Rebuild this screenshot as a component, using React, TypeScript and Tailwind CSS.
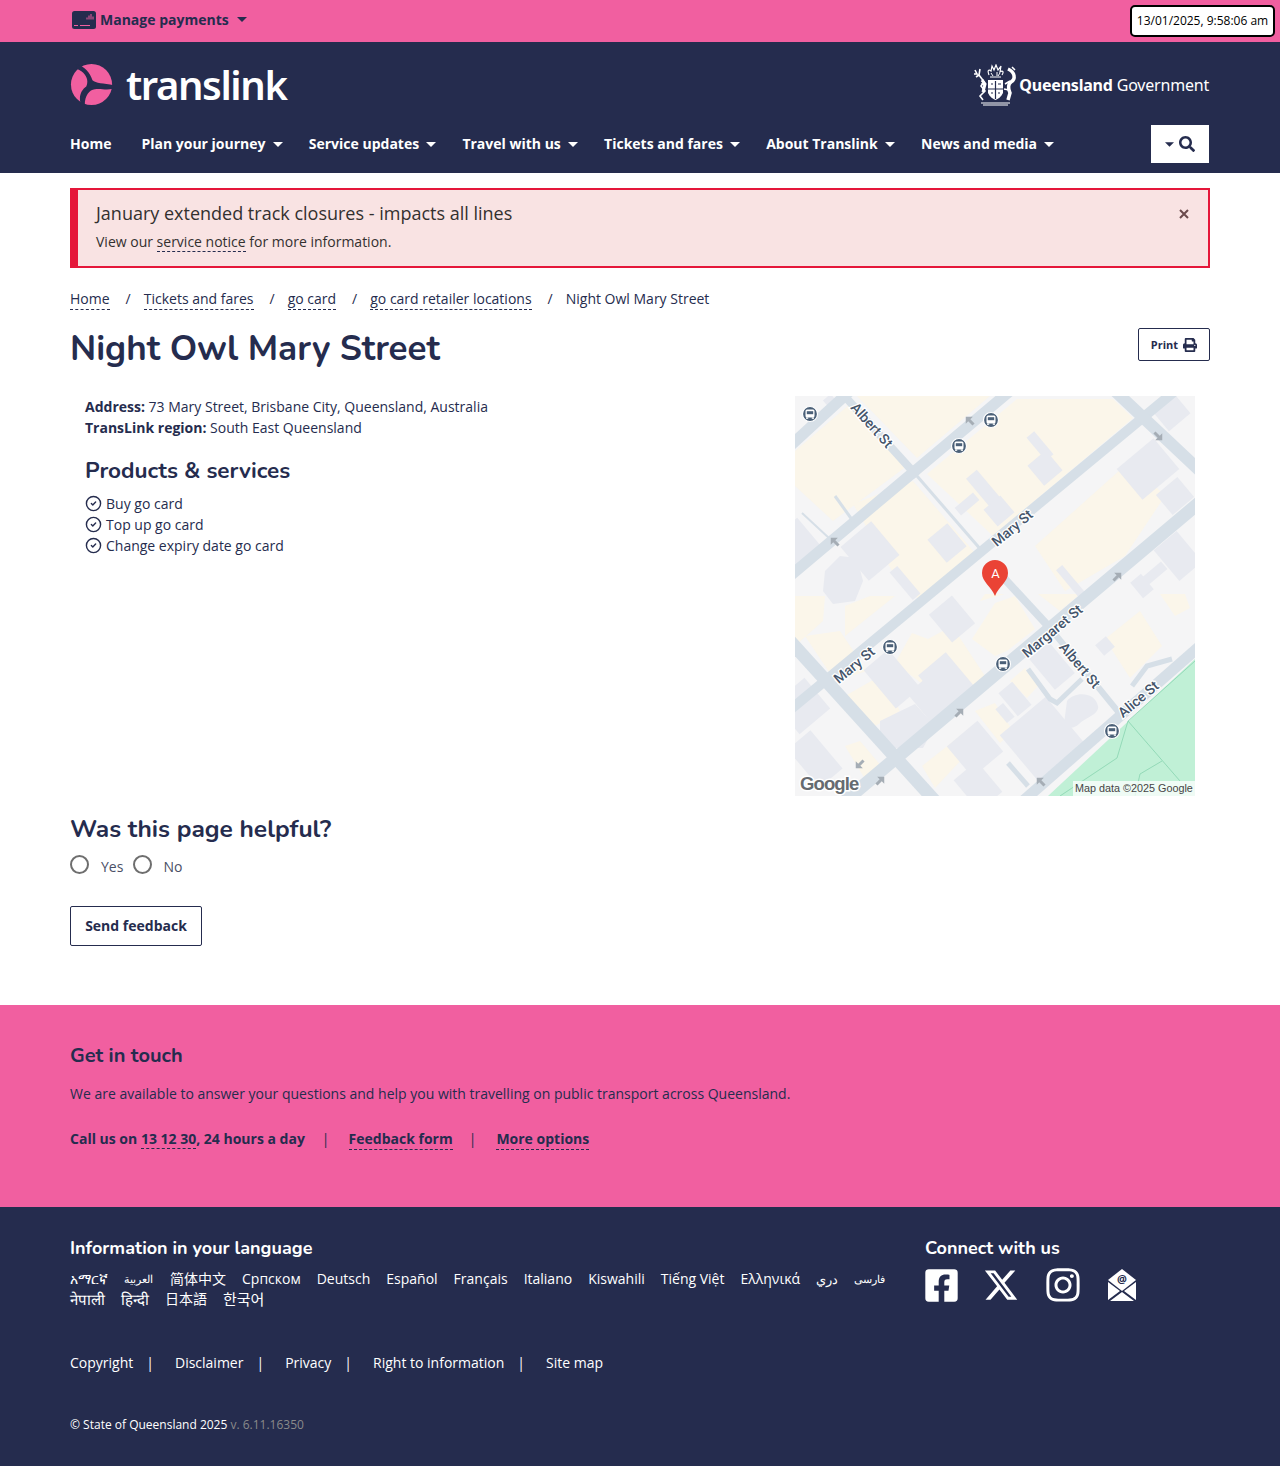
import { CircleCheck } from "lucide-react";
import { FaFacebookSquare, FaInstagram, FaPrint, FaSearch } from "react-icons/fa";
import { FaXTwitter } from "react-icons/fa6";

const Caret = ({ c = "#ffffff", w = 10, h = 5, cls = "" }: { c?: string; w?: number; h?: number; cls?: string }) => (
  <svg width={w} height={h} viewBox="0 0 10 5" className={cls}><path d="M0 0H10L5 5Z" fill={c} /></svg>
);

const Dash = ({ children, cls = "" }: { children: React.ReactNode; cls?: string }) => (
  <a className={`border-b border-dashed border-[#252c4e] ${cls}`}>{children}</a>
);

const cream: string[] = [
  "62,0 195,0 122,62",
  "132,78 222,3 318,3 338,22 198,140",
  "240,150 335,65 350,80 370,100 330,160 270,195",
  "58,108 118,85 180,157 125,205 100,180",
  "0,55 55,8 112,70 38,125 0,90",
  "0,200 30,200 28,225 0,250",
  "50,210 75,200 100,200 50,240",
  "10,240 45,235 72,275 40,285",
  "50,300 85,280 105,315 72,335",
  "100,267 117,237 133,243 157,230 190,280 177,300 157,267 130,290",
  "177,243 200,207 220,200 240,233 212,255 200,260",
  "185,205 190,198 210,198",
  "243,198 285,198 265,215",
  "215,285 230,272 243,290 232,302",
  "180,315 200,307 218,335 205,347",
  "127,370 165,340 170,360 140,392",
  "50,350 65,345 88,372 70,383",
  "310,243 345,215 367,250 335,282",
  "365,198 390,198 395,212 380,220",
  "300,100 340,88 345,125 310,150",
];

const grey: [number, number, number, number][] = [
  [188, 92, 14, 36], [172, 108, 24, 10], [204, 115, 22, 22], [245, 50, 10, 30], [250, 72, 24, 26],
  [152, 147, 26, 30], [75, 155, 40, 44], [0, 147, 36, 36], [110, 187, 10, 36], [377, 17, 28, 24],
  [353, 73, 48, 40], [380, 100, 28, 26], [383, 160, 30, 40], [360, 177, 24, 10], [347, 190, 14, 20],
  [277, 187, 8, 40], [157, 223, 30, 36], [97, 283, 32, 50], [153, 287, 36, 50], [137, 307, 26, 46],
  [7, 310, 40, 40], [20, 363, 30, 50], [180, 353, 40, 40], [220, 303, 18, 30], [210, 317, 10, 18],
  [247, 343, 60, 60], [257, 270, 26, 40], [310, 250, 14, 14], [183, 390, 30, 40], [35, 5, 10, 10],
];

const roads: [string, number][] = [
  ["-5,180 215,-5", 11],
  ["380,-5 -10,318", 10],
  ["405,106 50,405", 13],
  ["405,250 228,405", 11],
  ["-5,245 140,405", 13],
  ["45,-5 122,80", 8],
  ["122,80 187,155", 3],
  ["207,180 255,232", 8],
  ["255,232 325,318", 6],
  ["320,-5 405,75", 12],
  ["-5,50 55,-5", 11],
  ["40,100 58,125", 3],
  ["7,117 35,143", 2],
  ["213,367 233,390", 5],
  ["233,273 255,303 262,307 287,283", 5],
  ["337,290 352,270 377,263", 5],
];

const buses: [number, number][] = [[15, 18], [196, 24], [164, 50], [95, 251], [208, 268], [317, 335]];
const arrows: [number, number, number][] = [[175, 25, 225], [40, 146, 225], [363, 40, 45], [322, 181, -45], [164, 317, -45], [85, 385, -45], [246, 386, 225], [65, 368, 135]];
const labels: [string, number, number, number][] = [
  ["Albert St", 76, 30, 48], ["Mary St", 218, 133, -40], ["Mary St", 60, 270, -40],
  ["Margaret St", 258, 236, -40], ["Albert St", 284, 270, 50], ["Alice St", 344, 304, -40],
];

function MapArt() {
  return (
    <svg viewBox="0 0 400 400" width={400} height={400} className="block shrink-0">
      <rect width="400" height="400" fill="#f5f5f6" />
      {cream.map((p, i) => <polygon key={i} points={p} fill="#fbf6ea" />)}
      {grey.map(([x, y, w, h], i) => (
        <rect key={i} x={x - w / 2} y={y - h / 2} width={w} height={h} fill="#e8eaf0" transform={`rotate(-40 ${x} ${y})`} />
      ))}
      <polygon points="30,175 45,160 62,162 68,185 60,205 38,208 28,195" fill="#e8eaf0" />
      <polygon points="85,325 120,308 140,330 128,352 95,352 85,345" fill="#e8eaf0" />
      <path d="M272 305C280 295 300 296 303 310C305 318 290 322 284 328C275 336 268 330 270 320Z" fill="#e8eaf0" />
      <polygon points="400,263 400,400 253,400" fill="#c0f0d6" />
      <g fill="none" stroke="#7fd0ab" strokeWidth="0.7">
        <path d="M333 325L400 265M333 325L385 385M333 325L322 362L265 400M367 365L345 378L340 400" />
      </g>
      {roads.map(([p, w], i) => (
        <polyline key={i} points={p} fill="none" stroke="#d6dfe7" strokeWidth={w} />
      ))}
      {arrows.map(([x, y, r], i) => (
        <path key={i} transform={`translate(${x} ${y}) rotate(${r})`} d="M-5 1.5H1V5L6 0L1-5V-1.5H-5Z" fill="#a5adb5" />
      ))}
      {buses.map(([x, y], i) => (
        <g key={i} transform={`translate(${x} ${y})`}>
          <circle r="7.5" fill="#4b6078" stroke="#ffffff" strokeWidth="1.2" />
          <rect x="-4.5" y="-4.5" width="9" height="8" rx="1.5" fill="#ffffff" />
          <rect x="-3.2" y="-2.8" width="6.4" height="3" fill="#4b6078" />
          <rect x="-4" y="3.5" width="2.2" height="1.3" fill="#ffffff" />
          <rect x="1.8" y="3.5" width="2.2" height="1.3" fill="#ffffff" />
        </g>
      ))}
      {labels.map(([t, x, y, r], i) => (
        <text key={i} transform={`translate(${x} ${y}) rotate(${r})`} textAnchor="middle" dominantBaseline="middle"
          fontFamily="Roboto, sans-serif" fontWeight="500" fontSize="14" fill="#44546a" stroke="#ffffff" strokeWidth="2.5" paintOrder="stroke">{t}</text>
      ))}
      <path d="M200 200C196 190 187 186 187 177A13 13 0 0 1 213 177C213 186 204 190 200 200Z" fill="#ea4335" />
      <text x="200.5" y="182" textAnchor="middle" fontFamily="Roboto, sans-serif" fontSize="13" fill="#ffffff">A</text>
      <text x="5" y="394" fontFamily="'Liberation Sans', sans-serif" fontWeight="700" fontSize="18.5" letterSpacing="-0.9" fill="#666b70" stroke="#ffffff" strokeWidth="3" paintOrder="stroke">Google</text>
      <rect x="278" y="385" width="122" height="15" fill="#ffffff" fillOpacity="0.75" />
      <text x="280" y="396" fontFamily="'Liberation Sans', sans-serif" fontSize="10.8" fill="#444444">Map data ©2025 Google</text>
    </svg>
  );
}

const langs: [string, string][] = [
  ["አማርኛ", ""], ["العربية", "mr-[1px] text-[11px]"], ["简体中文", ""], ["Српском", ""], ["Deutsch", ""], ["Español", ""],
  ["Français", ""], ["Italiano", ""], ["Kiswahili", ""], ["Tiếng Việt", ""], ["Ελληνικά", ""], ["دري", "text-[13px]"],
  ["فارسی", "text-[11px]"], ["नेपाली", "text-[15px]"], ["हिन्दी", "text-[15px]"], ["日本語", ""], ["한국어", "text-[15px]"],
];
const nav = ["Plan your journey", "Service updates", "Travel with us", "Tickets and fares", "About Translink", "News and media"];
const crumbs = ["Home", "Tickets and fares", "go card", "go card retailer locations"];
const services = ["Buy go card", "Top up go card", "Change expiry date go card"];
const legal = ["Copyright", "Disclaimer", "Privacy", "Right to information"];
const HEAD = "font-['Nunito','Lato','Noto_Sans',sans-serif]";

export default function App() {
  return (
    <div className="relative min-h-[1466px] bg-white text-[14px] leading-[21px] text-[#252c4e] font-['Open_Sans','Noto_Sans_CJK_SC',sans-serif]">
      <div className="h-[42px] bg-[#f15fa0]">
        <div className="mx-auto flex h-[38px] w-[1140px] items-center pl-[2px]">
          <svg width="24" height="18" viewBox="0 0 24 18" className="mt-[1px] shrink-0">
            <rect width="24" height="18" rx="2.5" fill="#252c4e" />
            <path d="M2 14.5H6M8 14.5H18" stroke="#f15fa0" strokeWidth="1" />
            <path d="M15 8.5V6.5M17 8.5V4.5M19 8.5V3M21 8.5V5.5" stroke="#f15fa0" strokeWidth="1" />
          </svg>
          <span className="ml-[4px] font-bold text-[#252c4e]">Manage payments</span>
          <Caret c="#252c4e" cls="ml-[8px]" />
        </div>
      </div>
      <div className="absolute left-[1130px] top-[5px] flex h-[32px] w-[145px] items-center justify-center rounded-[5px] border-2 border-black bg-white pb-[2px] text-[12px] text-black">13/01/2025, 9:58:06 am</div>

      <header className="h-[131px] bg-[#252c4e]">
        <div className="mx-auto w-[1140px]">
          <div className="flex h-[83px] items-center justify-between pt-[2px]">
            <div className="flex items-center">
              <svg width="44" height="44" viewBox="5 2 46 46">
                <circle cx="27.5" cy="24.5" r="21.5" fill="#f15fa0" />
                <path d="M11 3C20 5 26 12 28.5 20C32 23.5 40 23 52 25.5L50 29C42 31 38 28.5 31 29.5C25 30 20 37 20.5 47L17 47C13 37 17 30 22 26.5C25 20 22 12 12 8Z" fill="#252c4e" />
              </svg>
              <span className="ml-[12px] font-['Noto_Sans',sans-serif] text-[40px] font-semibold leading-none tracking-[-1.4px] text-white">translink</span>
            </div>
            <div className="mr-[1px] flex items-center">
              <svg width="44" height="42" viewBox="0 0 44 42" fill="none" stroke="#ffffff">
                <path d="M16 11C14 6 16 5 18 7L19 2L21 6L23 1L25 6L28 2L27 8C30 6 31 8 29 11" strokeWidth="1.2" />
                <path d="M17 13H28M18 9L20 12M24 8V12M27 9L25 12" strokeWidth="1" />
                <path d="M2 6L4 10L1 10M7 5L6 11L9 15L11 18L8 22L12 27L7 32L10 36M6 11L3 13M8 20L13 21" strokeWidth="1.6" />
                <path d="M9 16L12 20L10 28" strokeWidth="3" />
                <path d="M15 16H30V29C28 33 25 35 22.5 36C20 35 17 33 15 29Z" fill="#ffffff" stroke="none" />
                <path d="M22.5 17V35M15 25H30M18 20H20M25 20H28M18 29H20M25 29H27" stroke="#252c4e" strokeWidth="1.2" />
                <path d="M35 5C42 8 43 15 38 18C35 20 35 25 37 29L35 36" strokeWidth="3.5" />
                <path d="M32 20L37 17M31 25L36 26M39 3L42 6" strokeWidth="1.5" />
                <path d="M8 39H37M10 41H35" strokeWidth="1" />
              </svg>
              <span className="ml-[2px] mt-[2px] font-['Noto_Sans',sans-serif] text-[16px] tracking-[-0.2px] text-white"><b className="font-bold">Queensland</b> Government</span>
            </div>
          </div>
          <nav className="flex h-[38px] items-center pb-[2px] text-white">
            <a className="mr-[30px] font-bold">Home</a>
            {nav.map((n) => (
              <a key={n} className="mr-[26.25px] flex items-center font-bold">
                {n}
                <Caret cls="ml-[7px] mt-[2px]" />
              </a>
            ))}
          </nav>
        </div>
      </header>
      <button className="absolute left-[1151px] top-[125px] flex h-[38px] w-[58px] items-center justify-center gap-[5px] bg-white text-[#252c4e]">
        <Caret c="#252c4e" w={9} h={5} />
        <FaSearch size={16} />
      </button>

      <main className="mx-auto w-[1140px]">
        <div className="relative mt-[15px] h-[80px] border-2 border-l-8 border-[#e5173a] bg-[#f9e3e3] pl-[18px] pt-[11px]">
          <div className="text-[18px] leading-[24px] text-[#33302f]">January extended track closures - impacts all lines</div>
          <div className="mt-[6px] text-[#33302f]">View our <Dash>service notice</Dash> for more information.</div>
          <svg width="10" height="10" viewBox="0 0 10 10" className="absolute right-[19px] top-[19px]"><path d="M1 1L9 9M9 1L1 9" stroke="#6b4a4c" strokeWidth="2" /></svg>
        </div>

        <div className="mt-[21px] flex items-start leading-[20px]">
          {crumbs.map((c) => (
            <span key={c} className="flex items-start">
              <Dash>{c}</Dash>
              <span className="ml-[16px] mr-[13px]">/</span>
            </span>
          ))}
          <span>Night Owl Mary Street</span>
        </div>

        <div className="mt-[18px] flex items-start justify-between">
          <h1 className={`${HEAD} text-[35px] font-bold leading-[42px]`}>Night Owl Mary Street</h1>
          <button className="flex h-[33px] w-[72px] items-center justify-center gap-[5px] rounded-[2px] border border-[#252c4e] text-[11px] font-bold">Print <FaPrint size={14} /></button>
        </div>

        <div className="mt-[26px] flex justify-between px-[15px]">
          <div>
            <p><b>Address:</b> 73 Mary Street, Brisbane City, Queensland, Australia</p>
            <p><b>TransLink region:</b> South East Queensland</p>
            <h2 className={`${HEAD} mt-[18px] text-[22.5px] font-bold leading-[30px]`}>Products &amp; services</h2>
            <ul className="mt-[7px]">
              {services.map((s) => (
                <li key={s} className="flex items-center gap-[4px]"><CircleCheck size={17} strokeWidth={2} />{s}</li>
              ))}
            </ul>
          </div>
          <MapArt />
        </div>

        <h2 className={`${HEAD} mt-[17px] text-[24.5px] font-bold leading-[32px]`}>Was this page helpful?</h2>
        <div className="mt-[6px] flex h-[26px] items-center text-[#4a4f66]">
          <span className="h-[19px] w-[19px] rounded-full border-2 border-[#6e6e6e]" />
          <span className="ml-[12px] mr-[10px] mt-[5px]">Yes</span>
          <span className="h-[19px] w-[19px] rounded-full border-2 border-[#6e6e6e]" />
          <span className="ml-[11px] mt-[5px]">No</span>
        </div>
        <button className="mt-[29px] h-[40px] w-[132px] rounded-[2px] border border-[#252c4e] pb-[2px] text-center font-bold">Send feedback</button>
      </main>

      <section className="mt-[59px] h-[202px] bg-[#f15fa0]">
        <div className="mx-auto w-[1140px] pt-[38px]">
          <h2 className={`${HEAD} text-[20px] font-bold leading-[26px]`}>Get in touch</h2>
          <p className="mt-[14px]">We are available to answer your questions and help you with travelling on public transport across Queensland.</p>
          <div className="mt-[24px] flex items-baseline font-bold">
            <span>Call us on <Dash>13 12 30</Dash>, 24 hours a day</span>
            <span className="ml-[17px] mr-[19px] font-normal">|</span>
            <Dash>Feedback form</Dash>
            <span className="ml-[16px] mr-[20px] font-normal">|</span>
            <Dash>More options</Dash>
          </div>
        </div>
      </section>

      <footer className="h-[259px] bg-[#252c4e] text-white">
        <div className="mx-auto w-[1140px] pt-[29px]">
          <div className="flex">
            <div className="w-[855px]">
              <h3 className={`${HEAD} text-[18px] font-bold leading-[24px]`}>Information in your language</h3>
              <ul className="mt-[9px] flex h-[40px] w-[830px] flex-wrap content-start items-center gap-x-[16px] leading-[20px]">
                {langs.map(([l, c]) => <li key={l} className={c}>{l}</li>)}
              </ul>
            </div>
            <div>
              <h3 className={`${HEAD} text-[18px] font-bold leading-[24px]`}>Connect with us</h3>
              <div className="mt-[6px] flex items-center">
                <FaFacebookSquare size={37} className="-ml-[2px]" />
                <FaXTwitter size={36} className="ml-[23px]" />
                <FaInstagram size={38} className="ml-[25px]" />
                <svg width="30" height="33" viewBox="0 0 30 33" className="ml-[25px]">
                  <path d="M15 0L29 11L15 22L1 11Z" fill="#ffffff" />
                  <text x="15" y="14" textAnchor="middle" fontSize="11" fontWeight="700" fill="#252c4e" fontFamily="'Open Sans', sans-serif">@</text>
                  <path d="M1 13L13 22L1 31ZM29 13L17 22L29 31ZM3 32L15 23L27 32Z" fill="#ffffff" />
                </svg>
              </div>
            </div>
          </div>
          <div className="mt-[43px] flex items-center">
            {legal.map((l) => (
              <span key={l} className="flex items-center">
                {l}<span className="ml-[13px] mr-[21px]">|</span>
              </span>
            ))}
            <span>Site map</span>
          </div>
          <p className="mt-[41px] text-[12px]">© State of Queensland 2025 <span className="text-[#8a8a8a]">v. 6.11.16350</span></p>
        </div>
      </footer>
    </div>
  );
}
